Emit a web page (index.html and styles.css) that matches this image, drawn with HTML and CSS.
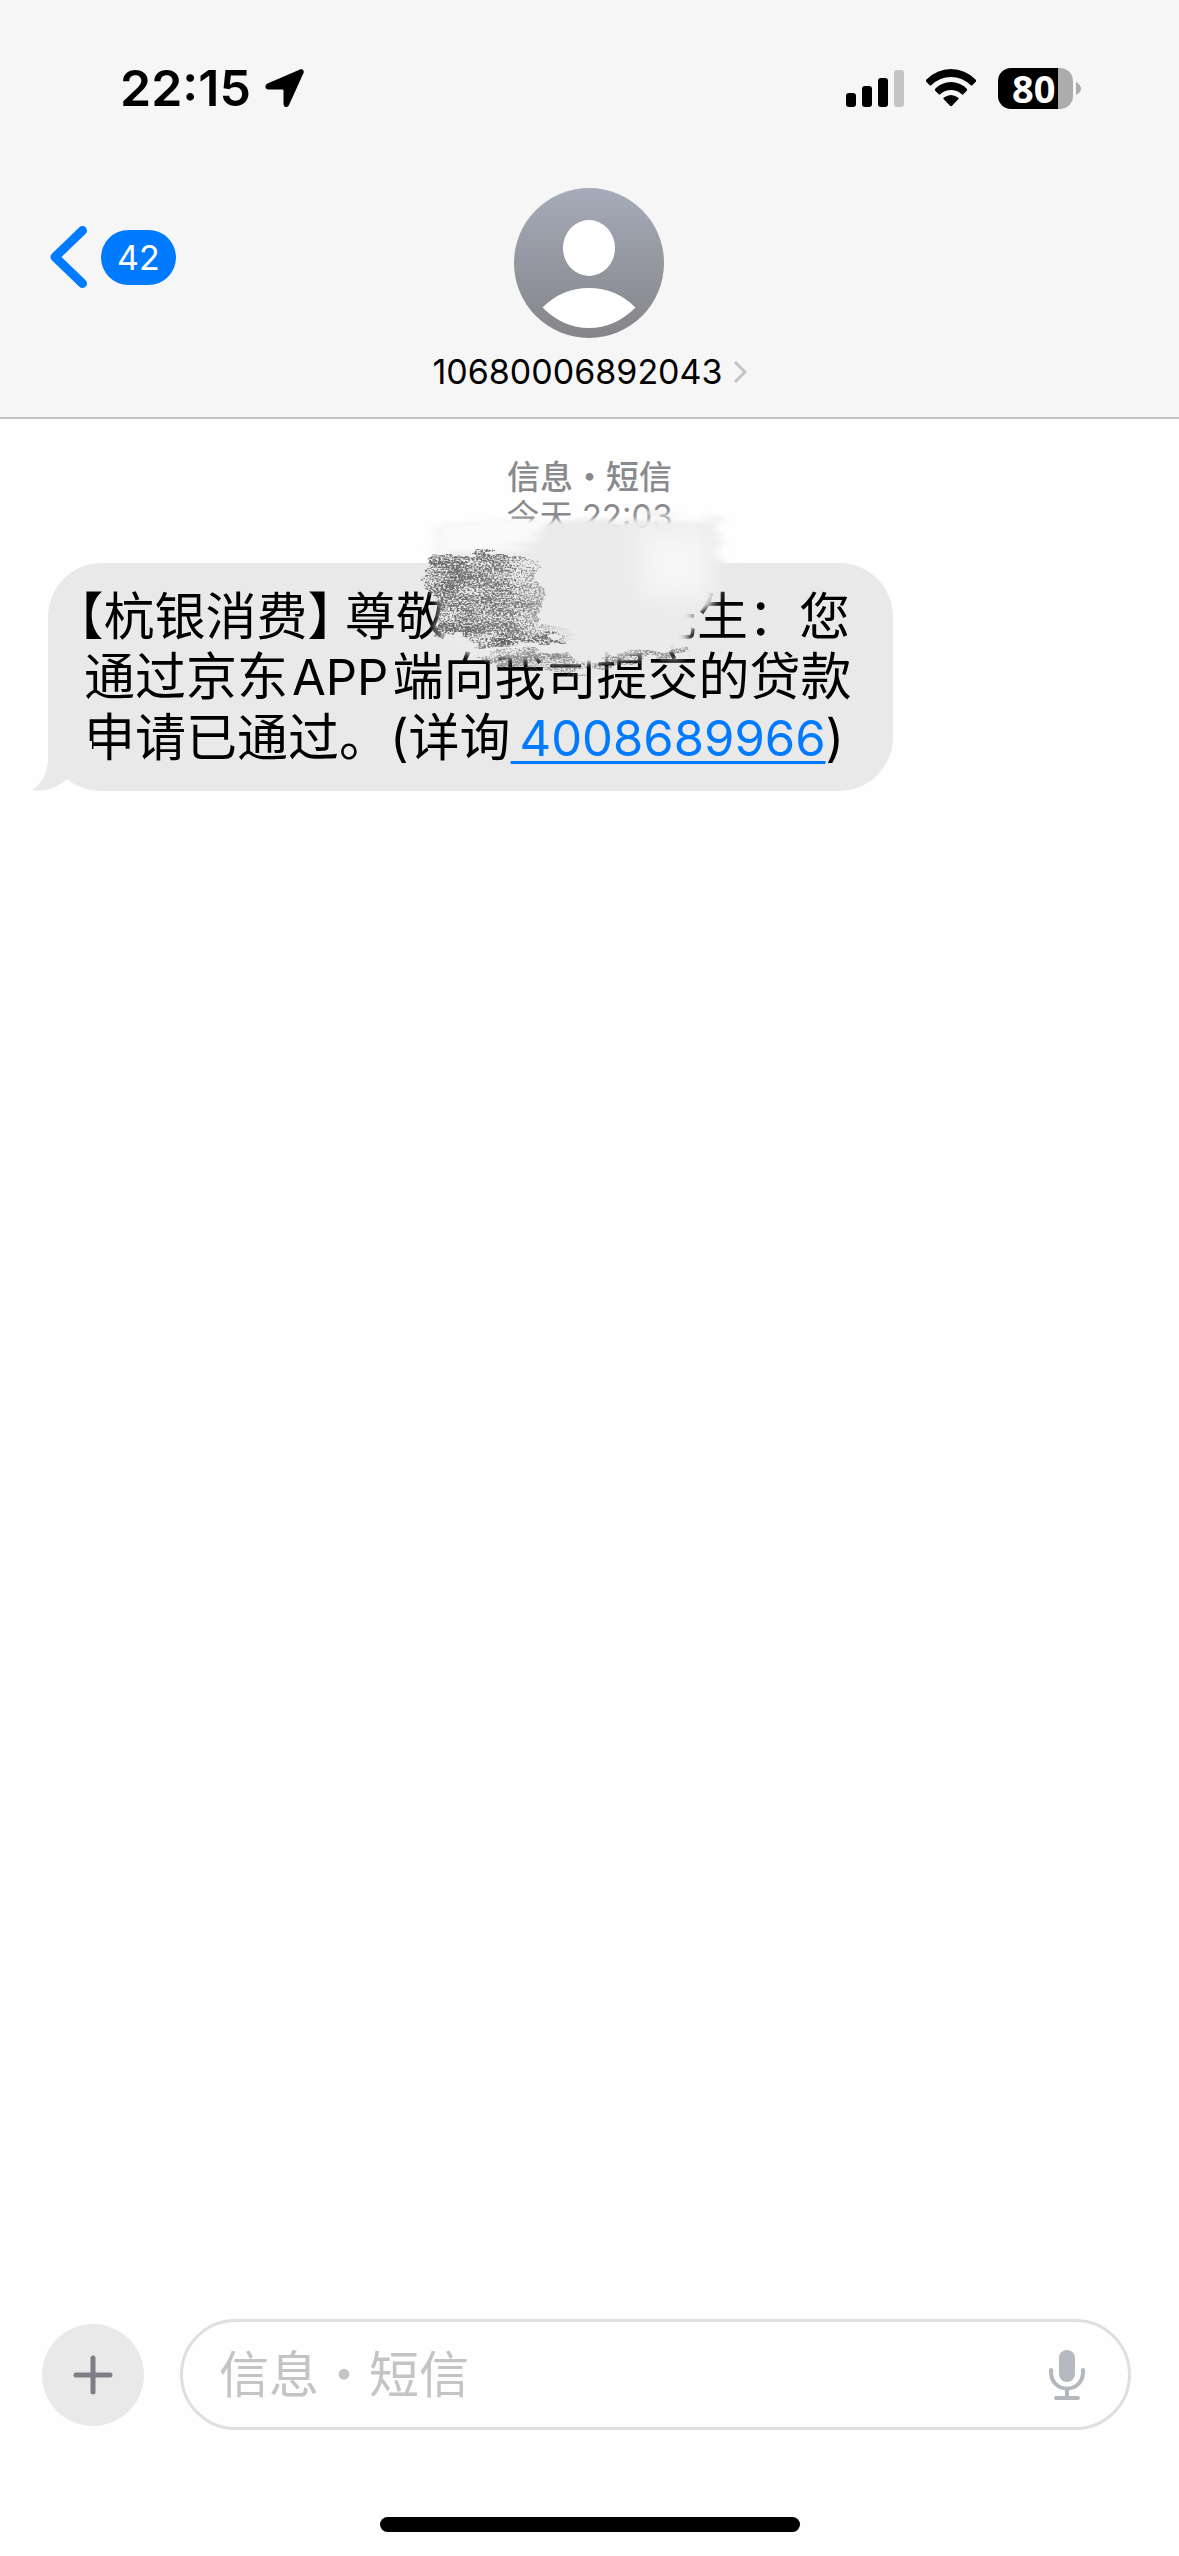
FILE: index.html
```html
<!DOCTYPE html>
<html lang="zh-CN">
<head>
<meta charset="utf-8">
<meta name="viewport" content="width=device-width, initial-scale=1">
<title>信息</title>
<link rel="stylesheet" href="styles.css">
</head>
<body>
<div class="app">
  <header class="header">
    <div class="status">
      <div class="status-left">
        <span class="clock">22:15</span>
        <svg class="location" viewBox="0 0 40 40" aria-hidden="true"><path d="M35 1.5 2.5 15.500C-.5 17-.3 21.500 3.500 21.500H17.500Q18.500 21.500 18.500 22.500V36C18.500 39.800 22.500 40 24 37L38.500 5C39.500 2.500 37.500.3 35 1.500Z"/></svg>
      </div>
      <div class="status-right">
        <svg class="signal" viewBox="0 0 58 38" aria-hidden="true"><rect y="24" width="10" height="14" rx="3"/><rect x="16" y="17" width="10" height="21" rx="3"/><rect x="32" y="9" width="10" height="29" rx="3"/><rect class="dim" x="48" y="1" width="10" height="37" rx="3"/></svg>
        <svg class="wifi" viewBox="0 0 50 38" aria-hidden="true"><path d="M0 12.500Q-.5 11.500.5 10.500Q11 0 25 0T49.500 10.500Q50.500 11.500 50 12.500L46.500 16Q45.500 17 44.500 16Q36 8 25 8T5.500 16Q4.500 17 3.500 16ZM9 21.500Q8.500 20.500 9.500 19.500Q16 13 25 13T40.500 19.500Q41.500 20.500 41 21.500L37.500 25Q36.500 26 35.500 25Q31 21 25 21T14.500 25Q13.500 26 12.500 25ZM17.500 30Q17 29 18 28.500Q25 23.500 32 28.500Q33 29 32.500 30L26 36.800Q25 37.500 24 36.800Z"/></svg>
        <div class="battery"><span class="battery-body">80</span><svg class="battery-cap" viewBox="0 0 5 13" aria-hidden="true"><path d="M0 0Q5 3 5 6.500T0 13Z"/></svg></div>
      </div>
    </div>
    <nav class="nav">
      <button class="back" aria-label="返回">
        <svg class="back-icon" viewBox="0 0 38 62" aria-hidden="true"><path d="M32.500 4.500 5 31 32.500 57.500"/></svg>
        <span class="badge">42</span>
      </button>
      <a class="contact" href="#contact">
        <svg class="avatar" viewBox="0 0 150 150" aria-hidden="true">
          <defs><linearGradient id="avatar-fill" x2="0" y2="1"><stop offset="0" stop-color="#a5abb9"/><stop offset="1" stop-color="#858589"/></linearGradient></defs>
          <circle cx="75" cy="75" r="75" fill="url(#avatar-fill)"/>
          <ellipse cx="75" cy="60" rx="26" ry="28" fill="#fff"/>
          <path d="M28.500 119.500Q48 100 75 100T121.500 119.500Q101 140 75 140T28.500 119.500Z" fill="#fff"/>
        </svg>
        <span class="number">10680006892043<svg class="chevron" viewBox="0 0 14 24" aria-hidden="true"><path d="M2 2 12 12 2 22"/></svg></span>
      </a>
    </nav>
  </header>

  <main class="thread">
    <p class="stamp"><span class="service">信息・短信</span><span>今天 22:03</span></p>
    <div class="bubble">
      <svg class="tail" viewBox="0 0 60 50" aria-hidden="true"><path d="M16 0V20Q14 40 0 49Q20 52 35 38Q44 46 60 49V0Z"/></svg>
      <p class="text"><span class="bracket">【</span>杭银消费<span class="bracket bracket-end">】</span>尊敬的<span class="masked"></span>先生：您通过京东<span class="latin">APP</span>端向我司提交的贷款申请已通过。(详询<a class="phone" href="tel:4008689966">&thinsp;4008689966</a>)</p>
      <svg class="scribble" viewBox="0 0 360 200" aria-hidden="true">
        <defs>
          <filter id="rough" x="-10%" y="-10%" width="120%" height="120%"><feTurbulence type="fractalNoise" baseFrequency="0.015 0.2" numOctaves="4" seed="4"/><feDisplacementMap in="SourceGraphic" scale="30" xChannelSelector="R" yChannelSelector="A"/><feGaussianBlur stdDeviation="4 2"/></filter>
          <filter id="grain" x="-10%" y="-10%" width="120%" height="120%">
            <feTurbulence type="fractalNoise" baseFrequency="0.45 0.6" numOctaves="2" seed="8" result="fine"/>
            <feTurbulence type="fractalNoise" baseFrequency="0.03 0.08" numOctaves="3" seed="3" result="broad"/>
            <feComposite in="fine" in2="broad" operator="arithmetic" k2=".8" k3=".4" result="mix"/>
            <feColorMatrix in="mix" values="0 0 0 0 .1  0 0 0 0 .1  0 0 0 0 .1  0 0 0 4 -1.85" result="specks"/>
            <feDisplacementMap in="SourceGraphic" in2="broad" scale="24" xChannelSelector="R" yChannelSelector="G" result="shape"/>
            <feComposite in="specks" in2="shape" operator="in"/>
          </filter>
          <filter id="soft" x="-30%" y="-30%" width="160%" height="160%"><feGaussianBlur stdDeviation="12"/></filter>
          <linearGradient id="fade"><stop offset="0" stop-opacity=".9"/><stop offset=".6" stop-opacity=".8"/><stop offset="1" stop-opacity="0"/></linearGradient>
        </defs>
        <path d="M30 30 130 26 250 20 312 26 312 70 304 106 288 126 276 156 170 166 60 158 30 146Z" fill="#ebebec" filter="url(#rough)"/>
        <path d="M30 28 140 22 120 50 30 56Z" fill="#fafafa" filter="url(#rough)"/>
        <path d="M230 34H300V100H236Z" fill="#f9f9f9" fill-opacity=".8" filter="url(#soft)"/>
        <path d="M26 56 120 56 136 100 130 130 170 138 130 146 26 140 32 112 20 96 22 70Z" fill="url(#fade)" filter="url(#grain)"/>
        <path d="M50 140 110 136 160 142 100 150 60 148Z" fill-opacity=".8" filter="url(#grain)"/>
        <path d="M70 156 120 154 180 164 280 148 284 154 210 168 160 176 120 168 74 162Z" fill-opacity=".6" filter="url(#grain)"/>
      </svg>
    </div>
  </main>

  <footer class="composer">
    <button class="add" aria-label="添加"><svg class="plus" viewBox="0 0 40 40" aria-hidden="true"><path d="M20 3V37M3 20H37"/></svg></button>
    <div class="field">
      <input class="input" type="text" aria-label="信息" placeholder="信息・短信">
      <button class="mic" aria-label="听写"><svg class="mic-icon" viewBox="0 0 36 50" aria-hidden="true"><rect x="10" width="16" height="32" rx="8"/><path class="mic-line" d="M2 20V22C2 44 34 44 34 22V20M18 40V47M7 48H29"/></svg></button>
    </div>
  </footer>
  <div class="home"></div>
</div>
</body>
</html>
```
FILE: styles.css
```css
* {
  box-sizing: border-box;
}

body {
  margin: 0;
  background: #fefefe;
  color: #000;
  font-family: "Inter", "Noto Sans CJK SC", sans-serif;
}

p {
  margin: 0;
}

button {
  border: 0;
  padding: 0;
  background: none;
  font: inherit;
}

svg {
  display: block;
  flex: none;
}

.app {
  display: flex;
  flex-direction: column;
  min-height: 100vh;
}

.header {
  border-bottom: 2px solid #c2c2c4;
  background: #f6f6f6;
}

.status {
  display: flex;
  justify-content: space-between;
  align-items: center;
  height: 188px;
  padding: 0 98px 12px 120px;
}

.status-left,
.status-right {
  display: flex;
  align-items: center;
  height: 64px;
}

.status-left {
  gap: 14px;
}

.status-right {
  gap: 22px;
}

.clock {
  font-size: 50px;
  font-weight: 600;
  line-height: 64px;
}

.location {
  width: 40px;
  height: 40px;
}

.signal {
  width: 58px;
  height: 38px;
}

.dim {
  fill: #c4c4c4;
}

.wifi {
  width: 50px;
  height: 38px;
}

.battery {
  display: flex;
  align-items: center;
  gap: 3px;
}

.battery-body {
  width: 75px;
  height: 41px;
  padding-left: 14px;
  border-radius: 13px;
  background: linear-gradient(90deg, #000 60px, #acacac 60px);
  color: #fff;
  font-family: "Open Sans", sans-serif;
  font-size: 38px;
  font-weight: 700;
  line-height: 41px;
}

.battery-cap {
  width: 5px;
  height: 13px;
  fill: #acacac;
}

.nav {
  display: grid;
  grid-template-columns: 1fr auto 1fr;
  padding: 0 50px 25px;
}

.back {
  display: flex;
  align-items: center;
  justify-self: start;
  gap: 13px;
  height: 138px;
}

.back-icon {
  width: 38px;
  height: 62px;
  fill: none;
  stroke: #007aff;
  stroke-width: 9;
  stroke-linecap: round;
  stroke-linejoin: round;
}

.badge {
  padding: 0 16px;
  border-radius: 28px;
  background: #007aff;
  color: #fff;
  font-size: 34px;
  line-height: 55px;
}

.contact {
  display: flex;
  flex-direction: column;
  align-items: center;
  gap: 14px;
  color: inherit;
  text-decoration: none;
}

.avatar {
  width: 150px;
  height: 150px;
}

.number {
  display: flex;
  align-items: center;
  gap: 10px;
  font-size: 34px;
  line-height: 40px;
}

.chevron {
  width: 14px;
  height: 24px;
  fill: none;
  stroke: #c4c4c6;
  stroke-width: 3;
}

.thread {
  flex: 1;
  padding: 39px 48px;
}

.stamp {
  display: flex;
  flex-direction: column;
  align-items: center;
  margin-bottom: 27px;
  color: #8a8a8e;
  font-size: 33px;
  line-height: 39px;
}

.service {
  font-weight: 500;
}

.bubble {
  position: relative;
  width: 78%;
  padding: 24px 30px 22px 36px;
  border-radius: 54px;
  background: #e9e9ea;
}

.tail {
  position: absolute;
  left: -16px;
  bottom: 0;
  width: 60px;
  height: 50px;
  fill: #e9e9ea;
}

.text {
  font-size: 51px;
  line-height: 60px;
  text-indent: -6px;
}

.bracket {
  font-feature-settings: "halt";
}

.bracket-end {
  margin-right: 12px;
}

.masked {
  display: inline-block;
  width: 148px;
}

.latin {
  margin: 0 4px;
  font-size: 49px;
}

.phone {
  color: #007aff;
  font-size: 49px;
  white-space: nowrap;
  text-decoration-thickness: 3px;
  text-underline-offset: 5px;
}

.scribble {
  position: absolute;
  top: -66px;
  left: 360px;
  width: 360px;
  height: 200px;
}

.composer {
  display: flex;
  align-items: center;
  gap: 36px;
  padding: 0 48px 0 42px;
}

.add {
  display: grid;
  flex: none;
  place-items: center;
  width: 102px;
  height: 102px;
  border-radius: 50%;
  background: #e9e9ea;
}

.plus {
  width: 40px;
  height: 40px;
  fill: none;
  stroke: #7e7e87;
  stroke-width: 5;
  stroke-linecap: round;
}

.field {
  display: flex;
  flex: 1;
  align-items: center;
  height: 111px;
  padding: 0 43px 0 36px;
  border: 3px solid #dfdfe0;
  border-radius: 56px;
}

.input {
  flex: 1;
  min-width: 0;
  padding: 0;
  border: 0;
  outline: 0;
  background: none;
  color: #000;
  font: inherit;
  font-size: 50px;
  line-height: 60px;
}

.input::placeholder {
  color: #c4c4c6;
  opacity: 1;
}

.mic-icon {
  width: 36px;
  height: 50px;
  fill: #b4babf;
}

.mic-line {
  fill: none;
  stroke: #b4b8bd;
  stroke-width: 4;
  stroke-linecap: round;
}

.home {
  width: 420px;
  height: 15px;
  margin: 87px auto 24px;
  border-radius: 8px;
  background: #000;
}
```
